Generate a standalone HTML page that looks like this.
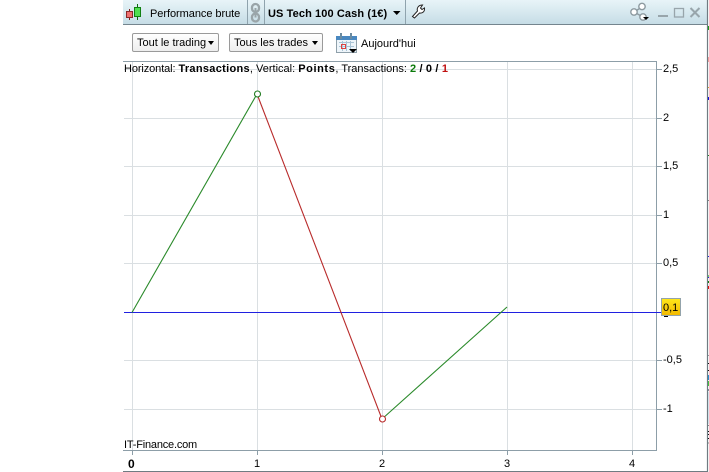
<!DOCTYPE html>
<html>
<head>
<meta charset="utf-8">
<style>
html,body{margin:0;padding:0;background:#fff}
body{width:709px;height:472px;overflow:hidden;position:relative;font-family:"Liberation Sans",sans-serif;font-size:11px;color:#000}
#hdr{position:absolute;left:123px;top:0;width:584px;height:24px;background:linear-gradient(#e8f4f8,#c6dde6);border-bottom:1px solid #74858e}
.sep{position:absolute;top:0;width:1px;height:24px;background:#8fa3ad}
.t{position:absolute;white-space:nowrap;line-height:13px}
.top b{letter-spacing:.3px}
.btn{position:absolute;top:33px;height:19px;box-sizing:border-box;border:1px solid #9a9a9a;border-radius:2px;background:linear-gradient(#fff,#eee);line-height:18px;padding-left:4px;white-space:nowrap}
.btn:after{content:"";position:absolute;right:4px;top:7px;border-left:3.500px solid transparent;border-right:3.500px solid transparent;border-top:4px solid #000}
svg{position:absolute;left:0;top:0}
</style>
</head>
<body>
<div id="hdr"></div>
<div class="sep" style="left:247px"></div>
<div class="sep" style="left:264px"></div>
<div class="sep" style="left:405px"></div>
<div class="t" style="left:150px;top:8px;letter-spacing:-.05px">Performance brute</div>
<div class="t" style="left:268px;top:8px;font-weight:bold;letter-spacing:.1px">US Tech 100 Cash (1€)</div>
<div class="btn" style="left:132px;width:87px">Tout le trading</div>
<div class="btn" style="left:229px;width:94px">Tous les trades</div>
<div class="t" style="left:361px;top:38px">Aujourd'hui</div>
<svg width="709" height="472" viewBox="0 0 709 472">
  <!-- header icons -->
  <path d="M129.500 9v11" stroke="#7a1f1f" fill="none"/>
  <rect x="126.500" y="11.500" width="6" height="6" fill="#f07070" stroke="#8a2a2a"/>
  <path d="M137.500 4v16" stroke="#0d6d0d" fill="none"/>
  <rect x="134.500" y="7.500" width="6" height="9" fill="#50e050" stroke="#128012"/>
  <g fill="none" stroke="#9aa5a9" stroke-width="2.300">
    <rect x="252" y="4" width="7" height="8" rx="3.500"/>
    <rect x="252" y="13.500" width="7" height="8" rx="3.500"/>
  </g>
  <path d="M255.500 8v9.500" stroke="#9aa5a9" stroke-width="2" fill="none"/>
  <path d="M393 11h7.500l-3.750 4z" fill="#000"/>
  <path d="M412.500 16.500l5-5.500c-1-3 1-6 5-6l-2 3 1.500 1.500 2.500-1.500c.5 3.500-2 5.500-5 5l-5 5z" fill="#fff" stroke="#222" stroke-width="1"/>
  <g fill="#fff" stroke="#8d9aa0" stroke-width="1.400">
    <path d="M642 7l-8 5 9 5" fill="none"/>
    <circle cx="642" cy="6.500" r="3.200"/>
    <circle cx="634" cy="12" r="3.200"/>
    <circle cx="643" cy="17" r="3.200"/>
  </g>
  <path d="M643 17h6l-3 3z" fill="#000"/>
  <rect x="658" y="15" width="10" height="2" fill="#98a5ab"/>
  <rect x="674.500" y="8.500" width="9" height="8.500" fill="none" stroke="#98a5ab" stroke-width="1.300"/>
  <path d="M690.500 8l9 9M699.500 8l-9 9" stroke="#98a5ab" stroke-width="2" fill="none"/>

  <!-- calendar -->
  <rect x="336.500" y="36.500" width="20" height="16" fill="#eef5fa" stroke="#8fa0aa"/>
  <rect x="336" y="36" width="21" height="4" fill="#4a88c0"/>
  <rect x="340" y="33" width="2" height="6" fill="#6c8ba0"/>
  <rect x="350" y="33" width="2" height="6" fill="#6c8ba0"/>
  <path d="M339 42.500h15M339 46.500h15M342.500 41v10M346.500 41v10M350.500 41v10" stroke="#a9c4d6" fill="none"/>
  <rect x="341.500" y="44.500" width="4" height="4" fill="none" stroke="#e04040"/>
  <path d="M349 49h8l-4 4z" fill="#000"/>

  <!-- chart grid -->
  <g stroke="#dadfe2" fill="none" shape-rendering="crispEdges">
    <path d="M132.500 62v388M257.500 62v388M382.500 62v388M507.500 62v388M632.500 62v388"/>
    <path d="M124 69.500h532M124 118.500h532M124 166.500h532M124 215.500h532M124 263.500h532M124 360.500h532M124 409.500h532"/>
  </g>
  <g stroke="#8d9ea8" fill="none" shape-rendering="crispEdges">
    <path d="M123 61.500H656.500V450.500H123"/>
    <path d="M657 69.500h5M657 118.500h5M657 166.500h5M657 215.500h5M657 263.500h5M657 360.500h5M657 409.500h5"/>
    <path d="M132.500 450v5M257.500 450v5M382.500 450v5M507.500 450v5M632.500 450v5"/>
  </g>
  <path d="M123 471.500H707" stroke="#6f7b82" fill="none" stroke-width="1"/>
  <path d="M707.500 0V472" stroke="#6f7b82" fill="none" stroke-width="1.200"/>

  <!-- series -->
  <path d="M124 312.500H661" stroke="#2020e0" fill="none" shape-rendering="crispEdges"/>
  <path d="M132 312.500L257 94" stroke="#2a8a2a" fill="none" stroke-width="1.100"/>
  <path d="M257 94L382 419" stroke="#b82a2a" fill="none" stroke-width="1.100"/>
  <path d="M382 419L507 307" stroke="#2a8a2a" fill="none" stroke-width="1.100"/>
  <circle cx="257.500" cy="94" r="3" fill="#fff" stroke="#1f7a1f" stroke-width="1.100"/>
  <circle cx="382.500" cy="419" r="3" fill="#fff" stroke="#b82a2a" stroke-width="1.100"/>

  <!-- value tag -->
  <defs><linearGradient id="g" x1="0" y1="0" x2="0" y2="1"><stop offset="0" stop-color="#ffe81a"/><stop offset="1" stop-color="#f2b800"/></linearGradient></defs>
  <rect x="664" y="315" width="4" height="2" fill="#000"/>
  <rect x="661.500" y="298.500" width="19" height="17" fill="url(#g)" stroke="#93a3ab"/>

  <!-- right edge marks -->
  <g shape-rendering="crispEdges">
    <rect x="708" y="26" width="1" height="4" fill="#1a9a1a"/>
    <rect x="708" y="57" width="1" height="5" fill="#f0a0a0"/>
    <rect x="708" y="87" width="1" height="1" fill="#d8a030"/>
    <rect x="708" y="97" width="1" height="3" fill="#1010e0"/>
    <rect x="708" y="155" width="1" height="1" fill="#208020"/>
    <rect x="708" y="200" width="1" height="1" fill="#808080"/>
    <rect x="708" y="256" width="1" height="1" fill="#2020e0"/>
    <rect x="708" y="275" width="1" height="2" fill="#70d070"/>
    <rect x="708" y="277" width="1" height="1" fill="#2020e0"/>
    <rect x="708" y="281" width="1" height="2" fill="#108010"/>
    <rect x="708" y="286" width="1" height="3" fill="#e01010"/>
    <rect x="708" y="355" width="1" height="1" fill="#999"/>
    <rect x="708" y="363" width="1" height="1" fill="#111"/>
    <rect x="708" y="370" width="1" height="1" fill="#111"/>
    <rect x="708" y="375" width="1" height="5" fill="#2a90d0"/>
    <rect x="708" y="381" width="1" height="5" fill="#40c040"/>
    <rect x="708" y="389" width="1" height="2" fill="#8090a0"/>
    <rect x="708" y="392" width="1" height="32" fill="#cfe2ea"/>
    <rect x="708" y="425" width="1" height="1" fill="#888"/>
    <rect x="708" y="431" width="1" height="1" fill="#111"/>
    <rect x="708" y="434" width="1" height="1" fill="#111"/>
    <rect x="708" y="438" width="1" height="1" fill="#111"/>
    <rect x="708" y="442" width="1" height="2" fill="#bbb"/>
  </g>
</svg>
<div class="t top" style="left:124px;top:63px"><span style="letter-spacing:-.1px">Horizontal: </span><b>Transactions</b>, Vertical: <b style="letter-spacing:.6px">Points</b>, Transactions: <b style="color:#0a7a0a">2</b> <b>/</b> <b>0</b> <b>/</b> <b style="color:#c01010">1</b></div>
<div class="t" style="left:124px;top:439px;letter-spacing:-.2px">IT-Finance.com</div>
<div class="t" style="left:663px;top:63px">2,5</div>
<div class="t" style="left:663px;top:112px">2</div>
<div class="t" style="left:663px;top:160px">1,5</div>
<div class="t" style="left:663px;top:209px">1</div>
<div class="t" style="left:663px;top:257px">0,5</div>
<div class="t" style="left:663px;top:354px">-0,5</div>
<div class="t" style="left:663px;top:403px">-1</div>
<div class="t" style="left:663px;top:302px">0,1</div>
<div class="t" style="left:128px;top:458px;font-weight:bold;font-size:12px">0</div>
<div class="t" style="left:254px;top:458px">1</div>
<div class="t" style="left:379px;top:458px">2</div>
<div class="t" style="left:504px;top:458px">3</div>
<div class="t" style="left:629px;top:458px">4</div>
</body>
</html>
